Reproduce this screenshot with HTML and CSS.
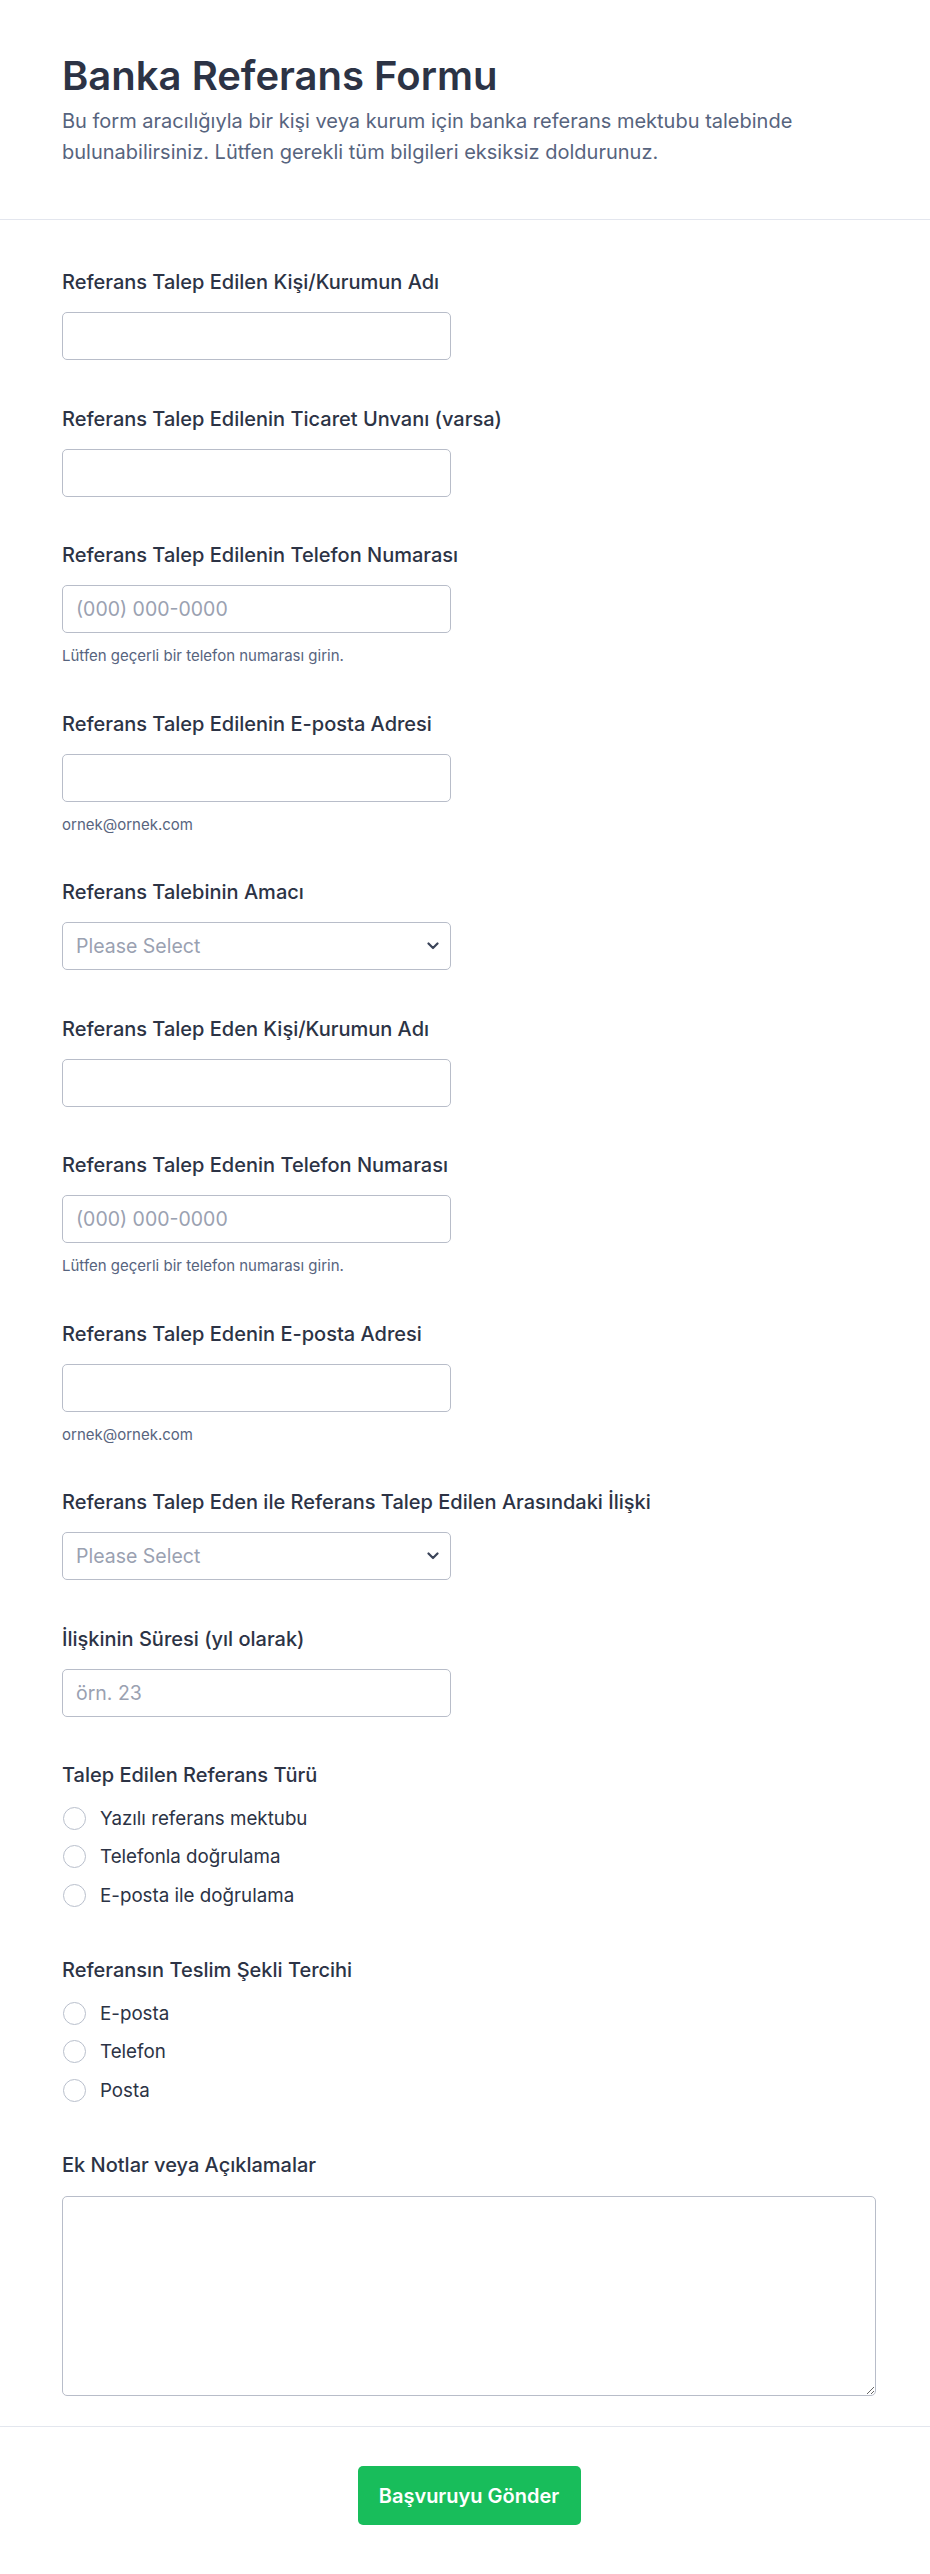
FILE: index.html
```html
<!DOCTYPE html>
<html lang="tr">
<head>
<meta charset="utf-8">
<title>Banka Referans Formu</title>
<link rel="stylesheet" href="styles.css">
</head>
<body>
<div class="page">
  <header class="header">
    <h1 class="title">Banka Referans Formu</h1>
    <p class="desc">Bu form aracılığıyla bir kişi veya kurum için banka referans mektubu talebinde bulunabilirsiniz. Lütfen gerekli tüm bilgileri eksiksiz doldurunuz.</p>
  </header>

  <form class="form">
    <div class="field">
      <label class="label">Referans Talep Edilen Kişi/Kurumun Adı</label>
      <input class="input" type="text">
    </div>
    <div class="field">
      <label class="label">Referans Talep Edilenin Ticaret Unvanı (varsa)</label>
      <input class="input" type="text">
    </div>
    <div class="field">
      <label class="label">Referans Talep Edilenin Telefon Numarası</label>
      <input class="input" type="text" placeholder="(000) 000-0000">
      <div class="sublabel">Lütfen geçerli bir telefon numarası girin.</div>
    </div>
    <div class="field">
      <label class="label">Referans Talep Edilenin E-posta Adresi</label>
      <input class="input" type="text">
      <div class="sublabel">ornek@ornek.com</div>
    </div>
    <div class="field">
      <label class="label">Referans Talebinin Amacı</label>
      <div class="select">
        <span class="select-text">Please Select</span>
        <svg class="chevron" width="12" height="8" viewBox="0 0 12 8"><path d="M1.5 1.5 L6 6 L10.5 1.5" fill="none" stroke="#3b4459" stroke-width="2.2" stroke-linecap="round" stroke-linejoin="round"/></svg>
      </div>
    </div>
    <div class="field">
      <label class="label">Referans Talep Eden Kişi/Kurumun Adı</label>
      <input class="input" type="text">
    </div>
    <div class="field">
      <label class="label">Referans Talep Edenin Telefon Numarası</label>
      <input class="input" type="text" placeholder="(000) 000-0000">
      <div class="sublabel">Lütfen geçerli bir telefon numarası girin.</div>
    </div>
    <div class="field">
      <label class="label">Referans Talep Edenin E-posta Adresi</label>
      <input class="input" type="text">
      <div class="sublabel">ornek@ornek.com</div>
    </div>
    <div class="field">
      <label class="label">Referans Talep Eden ile Referans Talep Edilen Arasındaki İlişki</label>
      <div class="select">
        <span class="select-text">Please Select</span>
        <svg class="chevron" width="12" height="8" viewBox="0 0 12 8"><path d="M1.5 1.5 L6 6 L10.5 1.5" fill="none" stroke="#3b4459" stroke-width="2.2" stroke-linecap="round" stroke-linejoin="round"/></svg>
      </div>
    </div>
    <div class="field">
      <label class="label">İlişkinin Süresi (yıl olarak)</label>
      <input class="input" type="text" placeholder="örn. 23">
    </div>

    <div class="field field-radio">
      <div class="label label-radio">Talep Edilen Referans Türü</div>
      <div class="options">
        <label class="option"><span class="radio"></span><span>Yazılı referans mektubu</span></label>
        <label class="option"><span class="radio"></span><span>Telefonla doğrulama</span></label>
        <label class="option"><span class="radio"></span><span>E-posta ile doğrulama</span></label>
      </div>
    </div>
    <div class="field field-radio">
      <div class="label label-radio">Referansın Teslim Şekli Tercihi</div>
      <div class="options">
        <label class="option"><span class="radio"></span><span>E-posta</span></label>
        <label class="option"><span class="radio"></span><span>Telefon</span></label>
        <label class="option"><span class="radio"></span><span>Posta</span></label>
      </div>
    </div>
    <div class="field field-last">
      <label class="label label-radio">Ek Notlar veya Açıklamalar</label>
      <textarea class="textarea"></textarea>
    </div>
  </form>

  <footer class="footer">
    <button class="submit" type="button">Başvuruyu Gönder</button>
  </footer>
</div>
</body>
</html>
```

FILE: styles.css
```css
* {
  box-sizing: border-box;
}

html, body {
  margin: 0;
  padding: 0;
  background: #ffffff;
}

body {
  font-family: Inter, "Noto Sans", "DejaVu Sans", sans-serif;
  color: #2c3345;
}

.page {
  width: 930px;
}

.header {
  padding: 52px 54px 51px 62px;
  border-bottom: 1px solid #e3e6ee;
}

.title {
  margin: 0;
  font-size: 40px;
  line-height: 48px;
  font-weight: 600;
  color: #2c3345;
}

.desc {
  margin: 6px 0 0;
  font-size: 20px;
  line-height: 31px;
  font-weight: 400;
  color: #57647e;
}

.form {
  padding: 50px 54px 30px 62px;
  border-bottom: 1px solid #e3e6ee;
}

.field {
  display: flex;
  flex-direction: column;
  align-items: flex-start;
  margin-bottom: 46.5px;
}

.field-radio {
  margin-bottom: 51px;
}

.field-last {
  margin-bottom: 0;
}

.label {
  display: block;
  font-size: 20px;
  line-height: 24px;
  font-weight: 500;
  color: #2c3345;
  margin-bottom: 18px;
}

.label-radio {
  margin-bottom: 19px;
}

.input,
.select {
  width: 389px;
  height: 48px;
  border: 1px solid #b8bdc9;
  border-radius: 5px;
  background: #ffffff;
  padding: 0 13px;
  font-family: Inter, "Noto Sans", sans-serif;
  font-size: 19.5px;
  color: #2c3345;
  outline: none;
}

.input::placeholder {
  color: #9aa1b1;
}

.select {
  display: flex;
  align-items: center;
  justify-content: space-between;
  padding-right: 11px;
}

.select-text {
  color: #9aa1b1;
  font-size: 19.5px;
}

.chevron {
  display: block;
}

.sublabel {
  margin-top: 14px;
  font-size: 15px;
  line-height: 18px;
  color: #57647e;
}

.options {
  display: flex;
  flex-direction: column;
  gap: 14.5px;
}

.option {
  display: flex;
  align-items: center;
  height: 24px;
  font-size: 18.75px;
  color: #2c3345;
}

.radio {
  width: 23px;
  height: 23px;
  border: 1.5px solid #b9bfcc;
  border-radius: 50%;
  margin-left: 1px;
  margin-right: 14px;
  flex: none;
}

.textarea {
  display: block;
  width: 814px;
  height: 200px;
  border: 1px solid #b8bdc9;
  border-radius: 5px;
  padding: 12px;
  font-family: Inter, sans-serif;
  font-size: 20px;
  resize: vertical;
}

.footer {
  display: flex;
  justify-content: center;
  padding: 39px 54px 49px 62px;
}

.submit {
  width: 223px;
  height: 59px;
  border: none;
  border-radius: 5px;
  background: #18bd5b;
  color: #ffffff;
  font-family: Inter, sans-serif;
  font-size: 20px;
  font-weight: 600;
}
```
